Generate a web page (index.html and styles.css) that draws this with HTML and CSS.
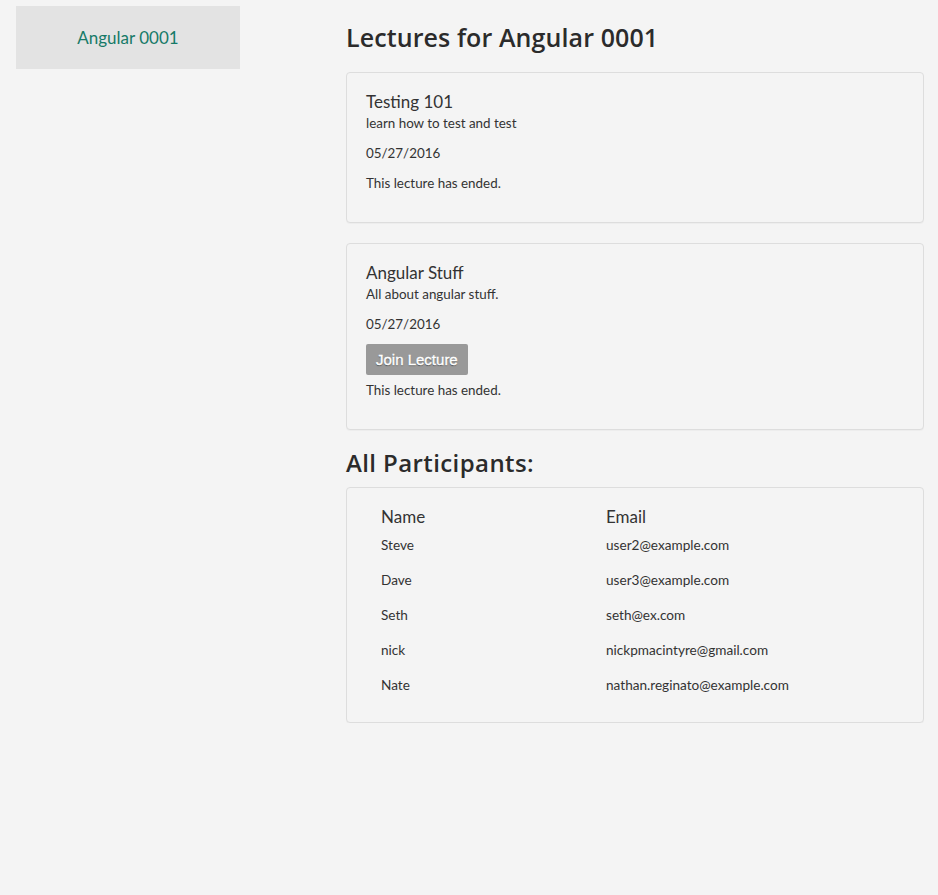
FILE: index.html
```html
<!DOCTYPE html>
<html>
<head>
<meta charset="utf-8">
<link rel="stylesheet" href="styles.css">
</head>
<body>
<div class="layout">
  <aside class="sidebar">
    <div class="course-tab">Angular 0001</div>
  </aside>
  <main class="main">
    <h1 class="page-title">Lectures for Angular 0001</h1>
    <section class="card lecture">
      <h3 class="lecture-title">Testing 101</h3>
      <p class="lecture-desc">learn how to test and test</p>
      <p class="lecture-date">05/27/2016</p>
      <p class="lecture-status">This lecture has ended.</p>
    </section>
    <section class="card lecture">
      <h3 class="lecture-title">Angular Stuff</h3>
      <p class="lecture-desc">All about angular stuff.</p>
      <p class="lecture-date">05/27/2016</p>
      <button class="join-btn">Join Lecture</button>
      <p class="lecture-status after-btn">This lecture has ended.</p>
    </section>
    <h2 class="section-title">All Participants:</h2>
    <section class="card participants">
      <table class="ptable">
        <thead>
          <tr><th class="col-name">Name</th><th>Email</th></tr>
        </thead>
        <tbody>
          <tr><td>Steve</td><td>user2@example.com</td></tr>
          <tr><td>Dave</td><td>user3@example.com</td></tr>
          <tr><td>Seth</td><td>seth@ex.com</td></tr>
          <tr><td>nick</td><td>nickpmacintyre@gmail.com</td></tr>
          <tr><td>Nate</td><td>nathan.reginato@example.com</td></tr>
        </tbody>
      </table>
    </section>
  </main>
</div>
</body>
</html>
```
FILE: styles.css
```css
html, body {
  margin: 0;
  padding: 0;
  background: #f4f4f4;
  color: #333;
  font-family: "Lato", "Noto Sans", sans-serif;
}
.layout {
  display: flex;
  align-items: flex-start;
  padding: 6px 14px 0 16px;
}
.sidebar {
  width: 224px;
  flex: none;
  margin-right: 106px;
}
.course-tab {
  background: #e3e3e3;
  height: 63px;
  display: flex;
  align-items: center;
  justify-content: center;
  color: #167a68;
  font-size: 17px;
}
.main {
  flex: 1;
  min-width: 0;
}
.page-title {
  font-family: "Open Sans", sans-serif;
  font-weight: 600;
  font-size: 25px;
  letter-spacing: 0.1px;
  line-height: 32px;
  margin: 15px 0 19px 0;
  color: #2b2b2b;
}
.card {
  border: 1px solid #ddd;
  border-radius: 4px;
  box-shadow: 0 1px 1px rgba(0,0,0,0.03);
  background: #f4f4f4;
}
.lecture {
  padding: 18px 20px 30px 19px;
  margin-bottom: 20px;
}
.lecture-title {
  margin: 0;
  font-size: 17px;
  font-weight: 400;
  line-height: 22px;
}
.lecture-desc, .lecture-date, .lecture-status {
  margin: 0;
  font-size: 13.4px;
  line-height: 18px;
}
.lecture-desc { margin-top: 1px; }
.lecture-date { margin-top: 12px; }
.lecture-status { margin-top: 12px; }
.lecture-status.after-btn { margin-top: 6px; }
.join-btn {
  display: block;
  margin-top: 11px;
  height: 31px;
  padding: 0 10px;
  border: none;
  border-radius: 2px;
  background: #999;
  color: #fff;
  font-family: "Liberation Sans", Arial, sans-serif;
  font-size: 15px;
  -webkit-text-stroke: 0.35px #fff;
  text-shadow: 0 1px 1px rgba(0,0,0,0.5);
}
.section-title {
  font-family: "Open Sans", sans-serif;
  font-weight: 600;
  font-size: 24px;
  letter-spacing: 0.4px;
  line-height: 26px;
  margin: 0 0 11px 0;
  color: #2b2b2b;
}
.participants {
  padding: 17px 20px 19px 19px;
}
.ptable {
  border-collapse: collapse;
}
.ptable th {
  text-align: left;
  font-weight: 400;
  font-size: 17px;
  line-height: 22px;
  padding: 1px 15px 0 15px;
}
.ptable th.col-name { width: 195px; }
.ptable td {
  font-size: 13.6px;
  line-height: 18px;
  padding: 8px 15px 9px 15px;
}
```
